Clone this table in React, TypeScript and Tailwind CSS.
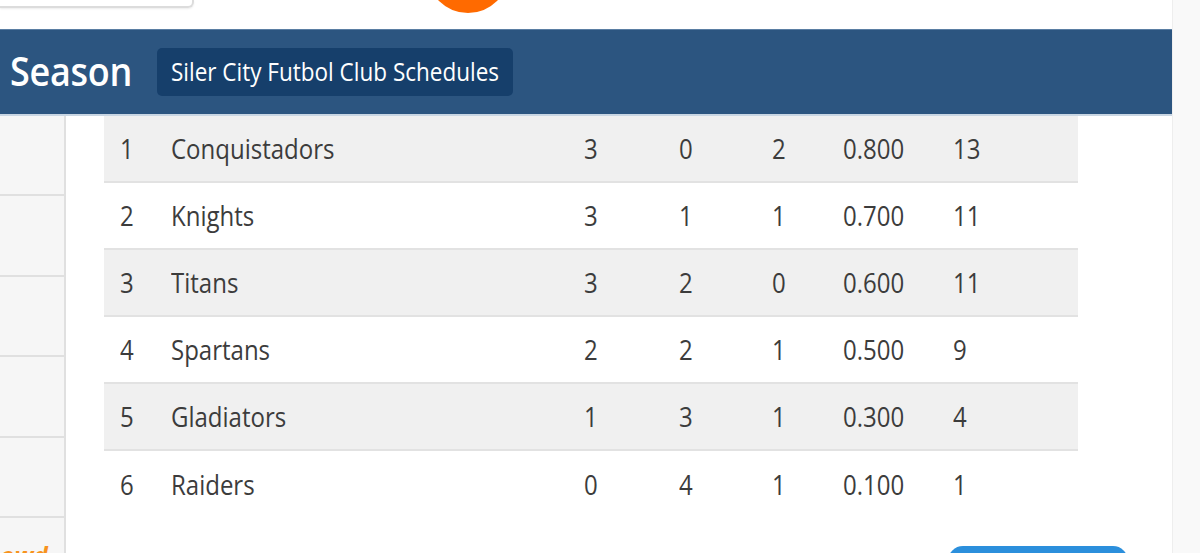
import * as React from "react";

type Standing = {
    rank: number;
    team: string;
    w: number;
    l: number;
    t: number;
    pct: string;
    pts: number;
};

const standings: Standing[] = [
    { rank: 1, team: "Conquistadors", w: 3, l: 0, t: 2, pct: "0.800", pts: 13 },
    { rank: 2, team: "Knights", w: 3, l: 1, t: 1, pct: "0.700", pts: 11 },
    { rank: 3, team: "Titans", w: 3, l: 2, t: 0, pct: "0.600", pts: 11 },
    { rank: 4, team: "Spartans", w: 2, l: 2, t: 1, pct: "0.500", pts: 9 },
    { rank: 5, team: "Gladiators", w: 1, l: 3, t: 1, pct: "0.300", pts: 4 },
    { rank: 6, team: "Raiders", w: 0, l: 4, t: 1, pct: "0.100", pts: 1 },
];

// text in the screenshot is a bit taller than Open Sans, stretch it a touch
const Cell = ({ w, children }: { w: string; children: React.ReactNode }) => (
    <div className={w + " pl-4"}>
        <span className="inline-block scale-y-[1.15]">{children}</span>
    </div>
);

const StandingRow = ({ row, last }: { row: Standing; last: boolean }) => {
    return (
        <div
            className={
                "flex h-[67px] shrink-0 items-center text-[24px] text-[#3c3c3c] " +
                (row.rank % 2 === 1 ? "bg-[#f0f0f0] " : "bg-white ") +
                (last ? "" : "border-b-2 border-[#e2e2e2]")
            }
        >
            <Cell w="w-[51px]">{row.rank}</Cell>
            <Cell w="w-[413px]">{row.team}</Cell>
            <Cell w="w-[95px]">{row.w}</Cell>
            <Cell w="w-[93px]">{row.l}</Cell>
            <Cell w="w-[71px]">{row.t}</Cell>
            <Cell w="w-[110px]">{row.pct}</Cell>
            <Cell w="flex-1">{row.pts}</Cell>
        </div>
    );
};

const App = () => {
    return (
        <div
            className="flex h-[553px] w-[1200px] overflow-hidden bg-white"
            style={{ fontFamily: '"Open Sans", "Noto Sans", sans-serif' }}
        >
            <div className="flex w-[1172px] shrink-0 flex-col">
                {/* top strip, mostly scrolled off */}
                <div className="flex h-[29px] shrink-0 items-start overflow-hidden">
                    <div className="h-[8px] w-[194px] rounded-br-[6px] border-b-2 border-r-2 border-[#dcdcdc] shadow-[0_1px_2px_rgba(0,0,0,0.08)]" />
                    <div className="-mt-[69px] ml-[233px] h-[82px] w-[82px] shrink-0 rounded-full bg-[#ff6a00]" />
                </div>

                {/* header bar */}
                <div className="flex h-[87px] shrink-0 items-center border-t border-b-2 border-t-[#5a7ea3] border-b-[#c9d6e3] bg-[#2c5580] pl-[10px]">
                    <h1 className="inline-block scale-y-[1.1] text-[36px] font-semibold tracking-[-0.3px] text-white">
                        Season
                    </h1>
                    <button className="ml-[25px] h-[48px] rounded-[5px] bg-[#163f6b] px-[14px] text-white">
                        <span className="inline-block scale-y-[1.1] text-[22.5px]">Siler City Futbol Club Schedules</span>
                    </button>
                </div>

                <div className="flex shrink-0">
                    {/* left sidebar */}
                    <div className="flex w-[66px] shrink-0 flex-col border-r-2 border-[#e0e0e0] bg-[#f6f6f6]">
                        <div className="h-[80px] border-b-2 border-[#e0e0e0]" />
                        <div className="h-[81px] border-b-2 border-[#e0e0e0]" />
                        <div className="h-[80px] border-b-2 border-[#e0e0e0]" />
                        <div className="h-[81px] border-b-2 border-[#e0e0e0]" />
                        <div className="h-[80px] border-b-2 border-[#e0e0e0]" />
                        <div className="h-[60px] overflow-hidden whitespace-nowrap pt-[25px] text-[24px] font-bold italic leading-none text-[#f7931e]">
                            <span className="-ml-[12px]">Lowd</span>
                        </div>
                    </div>

                    {/* standings table */}
                    <div className="ml-[38px] flex w-[974px] shrink-0 flex-col">
                        {standings.map((row, i) => (
                            <StandingRow key={row.rank} row={row} last={i === standings.length - 1} />
                        ))}
                        <div className="mt-[28px] flex">
                            <div className="ml-[844px] h-[30px] w-[180px] shrink-0 rounded-full bg-[#2b8fdc]" />
                        </div>
                    </div>
                </div>
            </div>
            <div className="flex-1 border-l border-[#eeeeee] bg-[#f9f9f9]" />
        </div>
    );
};

export default App;
